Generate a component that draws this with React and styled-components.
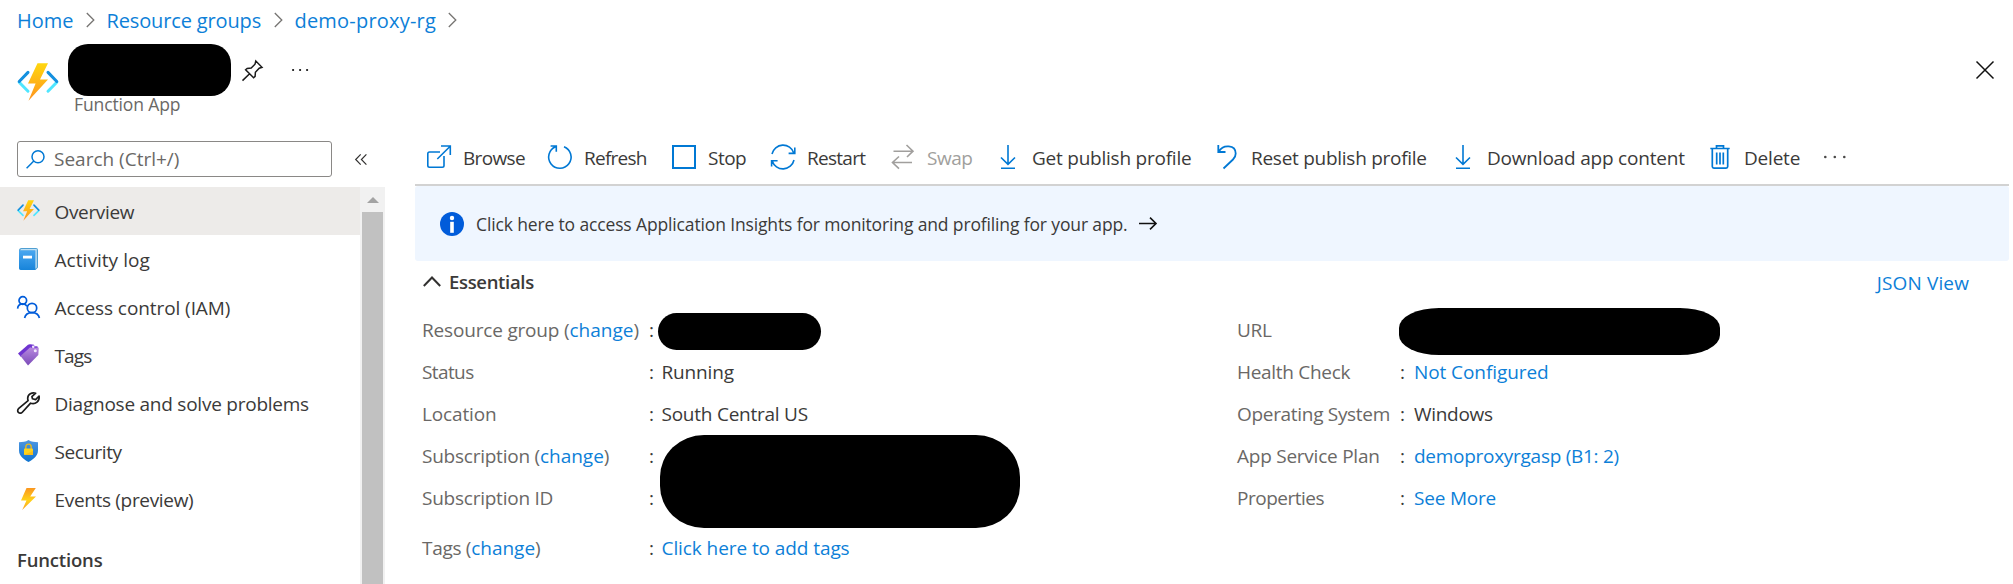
import React from "react";
import styled, { createGlobalStyle } from "styled-components";

const GlobalStyle = createGlobalStyle`
  * { box-sizing: border-box; }
  body {
    margin: 0;
    background: #fff;
    color: #3b3a39;
    font-family: "Open Sans", "Noto Sans", sans-serif;
    font-size: 19px;
    overflow: hidden;
  }
  svg { display: block; flex: none; overflow: visible; }
`;

const BLUE = "#0078d4";
const LINK = "#0d7fd8";

const Page = styled.div`
  display: flex;
  flex-direction: column;
  width: 2013px;
  height: 584px;
  overflow: hidden;
  white-space: nowrap;
`;

const Text = styled.span`
  padding-top: 2px;
  letter-spacing: ${(p) => p.$ls || 0}px;
`;

/* ---------- header ---------- */

const Breadcrumbs = styled.nav`
  display: flex;
  align-items: center;
  height: 40px;
  padding-left: 17px;
  font-size: 20px;
`;

const Crumb = styled.a`
  width: ${(p) => p.$w}px;
  padding-top: 1px;
  letter-spacing: ${(p) => p.$ls}px;
  line-height: 40px;
  color: ${LINK};
`;

const CrumbArrow = styled.svg`
  margin-right: ${(p) => p.$gap}px;
`;

const Header = styled.header`
  display: flex;
  align-items: flex-start;
  height: 85px;
  padding: 4px 19px 0 17px;
`;

const AppIconBox = styled.div`
  padding-top: 19px;
  width: 51px;
`;

const TitleBlock = styled.div`
  display: flex;
  flex-direction: column;
  width: 163px;
`;

const HiddenTitle = styled.div`
  height: 52px;
  border-radius: 20px;
  background: #000;
`;

const Subtitle = styled.div`
  padding-left: 6px;
  font-size: 17.5px;
  line-height: 17px;
  letter-spacing: -0.12px;
  color: #6a6866;
`;

const HeaderAction = styled.div`
  padding: ${(p) => p.$pad};
`;

const CloseBox = styled.div`
  margin-left: auto;
  padding-top: 17px;
`;

/* ---------- body ---------- */

const Body = styled.div`
  display: flex;
  flex: 1;
  min-height: 0;
`;

const Sidebar = styled.aside`
  display: flex;
  flex-direction: column;
  width: 385px;
`;

const SearchRow = styled.div`
  display: flex;
  align-items: center;
  height: 62px;
  padding: 6px 0 0 17px;
`;

const SearchBox = styled.div`
  display: flex;
  align-items: center;
  gap: 9px;
  width: 315px;
  height: 36px;
  margin-right: 23px;
  padding-left: 8px;
  border: 1px solid #8a8886;
  border-radius: 3px;
  color: #6a6866;
`;

const SearchText = styled.span`
  padding-bottom: 1px;
`;

const MenuArea = styled.div`
  display: flex;
  flex: 1;
  min-height: 0;
`;

const Menu = styled.ul`
  flex: 1;
  margin: 0;
  padding: 0;
  list-style: none;
`;

const MenuItem = styled.li`
  display: flex;
  align-items: center;
  gap: 13.5px;
  height: 48px;
  padding-left: 16px;
  background: ${(p) => (p.$active ? "#edebe9" : "transparent")};
`;

const MenuIcon = styled.span`
  display: flex;
  align-items: center;
  justify-content: center;
  width: 25px;
  height: 24px;
  margin-top: -1px;
`;

const MenuHeading = styled.li`
  height: 61px;
  padding: 24px 0 0 17px;
  font-size: 18.5px;
  font-weight: 600;
  line-height: 25px;
  letter-spacing: -0.17px;
`;

const Scrollbar = styled.div`
  display: flex;
  flex-direction: column;
  align-items: center;
  width: 25px;
  background: #f1f1f1;
`;

const ScrollArrow = styled.div`
  width: 0;
  height: 0;
  margin: 10px 0 9px;
  border: 6px solid transparent;
  border-top: 0;
  border-bottom: 6px solid #a3a3a3;
`;

const Thumb = styled.div`
  flex: 1;
  width: 21px;
  background: #c1c1c1;
`;

const Main = styled.main`
  flex: 1;
  margin-left: 30px;
  margin-right: 4px;
`;

const Toolbar = styled.div`
  display: flex;
  align-items: center;
  height: 61px;
  padding: 4px 0 0 12px;
  border-bottom: 2px solid #d2d2d2;
`;

const ToolButton = styled.div`
  display: flex;
  align-items: center;
  gap: 12px;
  width: ${(p) => p.$w}px;
  height: 36px;
  color: ${(p) => (p.$disabled ? "#a19f9d" : "#3b3a39")};
`;

const Banner = styled.div`
  display: flex;
  align-items: center;
  height: 75px;
  padding-left: 25px;
  border-radius: 3px;
  background: #eff6ff;
  font-size: 17.5px;
`;

const BannerText = styled.span`
  width: 662px;
  margin: 0 0 0 12px;
  letter-spacing: -0.14px;
`;

const EssentialsBar = styled.div`
  display: flex;
  align-items: center;
  justify-content: space-between;
  height: 42px;
  padding: 0 40px 0 8px;
`;

const EssentialsTitle = styled.div`
  display: flex;
  align-items: center;
  gap: 8px;
  margin-bottom: 1px;
  font-size: 18.5px;
  font-weight: 600;
  letter-spacing: -0.33px;
`;

const Link = styled.a`
  color: ${LINK};
  letter-spacing: ${(p) => p.$ls || 0}px;
`;

const JsonLink = styled(Link)`
  padding-top: 2px;
`;

const Details = styled.div`
  position: relative;
  display: flex;
  padding: 6px 0 0 7px;
`;

const DetailColumn = styled.dl`
  width: ${(p) => p.$w}px;
  margin: 0;
`;

const DetailRow = styled.div`
  display: flex;
  align-items: center;
  height: 42px;
  margin-top: ${(p) => (p.$spaced ? 8 : 0)}px;
`;

const Term = styled.dt`
  width: ${(p) => p.$w}px;
  color: #6a6866;
  letter-spacing: ${(p) => p.$ls || 0}px;
`;

const Colon = styled.span`
  width: ${(p) => p.$w}px;
`;

const Value = styled.dd`
  margin: 0;
  letter-spacing: ${(p) => p.$ls || 0}px;
`;

const Redaction = styled.div`
  position: absolute;
  left: ${(p) => p.$x}px;
  top: ${(p) => p.$y}px;
  width: ${(p) => p.$w}px;
  height: ${(p) => p.$h}px;
  border-radius: ${(p) => p.$r};
  background: #000;
`;

/* ---------- icons ---------- */

const Line = styled.svg.attrs((p) => ({ fill: "none", strokeWidth: p.strokeWidth || 1.6 }))`
  stroke: ${(p) => p.$c || BLUE};
`;

function FunctionIcon({ width, id }) {
  return (
    <svg width={width} height={(width * 38) / 42} viewBox="0 0 42 38">
      <defs>
        <linearGradient id={id} x1="0" y1="0" x2="0" y2="1">
          <stop offset="0" stopColor="#ffd70f" />
          <stop offset="1" stopColor="#fe921f" />
        </linearGradient>
      </defs>
      <g fill="none" strokeWidth="3" strokeLinecap="round">
        <path d="M11 28.2 2.2 19.3M31 28.2 39.8 19.3" stroke="#50e6ff" />
        <path d="M11 9.4 2.2 18.5M31 9.4 39.8 18.5" stroke="#1490df" />
      </g>
      <path d="M20.5.3H31L23 16.6H31L11.5 37.8 18.6 20.6H11Z" fill={`url(#${id})`} />
    </svg>
  );
}

const LogIcon = () => (
  <svg width="19" height="22" viewBox="0 0 19 22">
    <defs>
      <linearGradient id="log" x1="0" y1="0" x2="0" y2="1">
        <stop offset="0" stopColor="#4aa7f0" />
        <stop offset="1" stopColor="#1784da" />
      </linearGradient>
    </defs>
    <path d="M2.5 0H17Q19 0 19 2V19.5L16.5 22H2.5Q0 22 0 19V2.5Q0 0 2.5 0Z" fill="#4f9fd2" />
    <path d="M2 1H17.8V19.5L16.3 20.7V2.4H1Z" fill="#bfe0f5" />
    <path d="M0 2.4H16.2V22H2Q0 22 0 20Z" fill="url(#log)" />
    <rect x="4" y="7.7" width="9" height="2.8" fill="#fff" />
  </svg>
);

const PeopleIcon = () => (
  <Line width="23" height="22" viewBox="0 0 23 22" $c="#015cda" strokeWidth="1.7">
    <circle cx="5.8" cy="4.5" r="3.8" />
    <circle cx="15" cy="12" r="4.7" />
    <path d="M.6 12.6C1.2 6.8 8 6.8 10 10.2M7.6 22C9 14.7 21 14.7 22.4 22" />
  </Line>
);

const TagIcon = () => (
  <svg width="21" height="22" viewBox="0 0 21 22">
    <defs>
      <linearGradient id="tag" x1="0" y1="0" x2="0" y2="1">
        <stop offset="0" stopColor="#b98be0" />
        <stop offset="1" stopColor="#7a4ab8" />
      </linearGradient>
    </defs>
    <path d="M0 9.5 10 .8Q11 0 12.3.2L16 .8 17 4 3 13Z" fill="#6f34d0" />
    <path d="M2.5 12 12.5 3H19.5Q20.7 3.2 20.7 4.5L20.3 11 10 21.6Z" fill="url(#tag)" />
    <path d="M12.5 3H19.5" stroke="#6f34d0" strokeWidth="1.4" />
    <circle cx="15.2" cy="2.8" r="1.3" fill="#f1e6fb" />
    <circle cx="17.3" cy="6.8" r="1.5" fill="#f1e6fb" />
  </svg>
);

const WrenchIcon = () => (
  <Line width="23" height="22" viewBox="0 0 23 22" $c="#1b1b1b" strokeWidth="1.7" strokeLinejoin="round">
    <path d="M18.7 1.2C15-.1 10.7 2.2 10.7 6.3Q10.7 7.6 11.1 8.6L1.8 16.4C.4 17.7.4 19.4 1.4 20.4 2.6 21.6 4.2 21.4 5.3 20.2L13.6 11.2C18.7 12.8 22.8 9 22.1 4L18.6 7.6 15.5 6.8 14.9 4.6Z" />
  </Line>
);

const ShieldIcon = () => (
  <svg width="19" height="22" viewBox="0 0 19 22">
    <defs>
      <linearGradient id="shield" x1="0" y1="0" x2="0" y2="1">
        <stop offset="0" stopColor="#4f97e2" />
        <stop offset="1" stopColor="#0f74d0" />
      </linearGradient>
    </defs>
    <path d="M9.5 0C12.5 2 15.5 2 19 2.3V10.5C19 16.5 13 20 9.5 22 6 20 0 16.5 0 10.5V2.3C3.5 2 6.5 2 9.5 0Z" fill="url(#shield)" />
    <path d="M6.8 9V7C6.8 3.2 12.2 3.2 12.2 7V9" fill="none" stroke="#e8b820" strokeWidth="1.4" />
    <rect x="5" y="8.6" width="9" height="6.4" rx=".8" fill="#ffd319" />
    <path d="M5 15 14 11V15Z" fill="#f6bd1c" />
  </svg>
);

const BoltIcon = () => (
  <svg width="15" height="22" viewBox="0 0 15 22">
    <defs>
      <linearGradient id="bolt" x1="0" y1="0" x2="0" y2="1">
        <stop offset="0" stopColor="#fa961f" />
        <stop offset=".55" stopColor="#ffd21a" />
        <stop offset="1" stopColor="#fb9f24" />
      </linearGradient>
    </defs>
    <path d="M5.5 0H14.8L9.2 8.4H15L1.2 22 5.5 12.4H0Z" fill="url(#bolt)" />
  </svg>
);

const Ellipsis = ({ color, size, step }) => (
  <svg width={step * 2 + size} height="4" viewBox={`0 0 ${step * 2 + size} 4`} fill={color}>
    {[0, 1, 2].map((i) => (
      <circle key={i} cx={size / 2 + i * step} cy="2" r={size / 2} />
    ))}
  </svg>
);

const Tool = ({ children, ...p }) => (
  <Line width="24" height="24" viewBox="0 0 24 24" {...p}>
    {children}
  </Line>
);

const DownloadArrow = () => (
  <Tool>
    <path d="M12 0V19M5 12.5 12 19.3 19 12.5M5 23.2H19" />
  </Tool>
);

const TOOLS = [
  { text: "Browse", ls: -0.65, w: 121, icon: <Tool><path d="M13 7H2.5Q.8 7 .8 8.7V20.5Q.8 22.2 2.5 22.2H15.3Q17 22.2 17 20.5V11M10.3 14 23.2 1.2M14 1H23.3V10" /></Tool> },
  { text: "Refresh", ls: -0.75, w: 124, icon: <Tool><path d="M16 1.7A11.2 11.2 0 1 1 7.5 1.8M2.6 1H8.3V6.7" /></Tool> },
  { text: "Stop", ls: -0.5, w: 99, icon: <Tool strokeWidth="2"><rect x="1" y="1" width="22" height="22" /></Tool> },
  { text: "Restart", ls: -0.72, w: 120, icon: <Tool><path d="M1 9A11.3 11.3 0 0 1 22.8 8M23.8 2.6V8.4H17.6M23 15A11.3 11.3 0 0 1 1.2 16M.6 21.5V15.7H6.6" /></Tool> },
  { text: "Swap", ls: -0.5, w: 105, disabled: true, icon: <Tool $c="#a19f9d"><path d="M2.5 6.2H22M15.5 0 22 6.2 16 12M21 17.5H1.5M8 11.5 1.5 17.5 8 23.7" /></Tool> },
  { text: "Get publish profile", ls: -0.23, w: 219, icon: <DownloadArrow /> },
  { text: "Reset publish profile", ls: -0.27, w: 236, icon: <Tool strokeWidth="1.8"><path d="M3.3 0V7H10.5M3.8 6.5C8-1 20.7-.3 20.7 8.5 20.7 11 19.8 12.8 18 14.5L8.5 23.5" /></Tool> },
  { text: "Download app content", ls: -0.2, w: 257, icon: <DownloadArrow /> },
  { text: "Delete", ls: -0.2, w: 116, icon: <Tool strokeWidth="1.7"><path d="M2.3 3.5H21.7M8.5 3.5V.9H15.5V3.5M4.3 3.5V21.5Q4.3 23.1 5.9 23.1H18.1Q19.7 23.1 19.7 21.5V3.5M8.7 7.5V19.5M12 7.5V19.5M15.3 7.5V19.5" /></Tool> },
];

const MENU = [
  { text: "Overview", ls: -0.35, active: true, icon: <FunctionIcon width={23} id="fn-small" /> },
  { text: "Activity log", ls: 0.05, icon: <LogIcon /> },
  { text: "Access control (IAM)", ls: -0.08, icon: <PeopleIcon /> },
  { text: "Tags", ls: -0.9, icon: <TagIcon /> },
  { text: "Diagnose and solve problems", ls: -0.24, icon: <WrenchIcon /> },
  { text: "Security", ls: -0.45, icon: <ShieldIcon /> },
  { text: "Events (preview)", ls: -0.33, icon: <BoltIcon /> },
];

const LEFT = [
  { term: "Resource group", change: true, ls: -0.18 },
  { term: "Status", ls: -0.6, value: "Running", vls: -0.15 },
  { term: "Location", ls: -0.14, value: "South Central US", vls: -0.24 },
  { term: "Subscription", change: true, ls: -0.24 },
  { term: "Subscription ID", ls: -0.24 },
  { term: "Tags", change: true, ls: -0.3, value: "Click here to add tags", vls: -0.08, link: true, spaced: true },
];

const RIGHT = [
  { term: "URL", ls: -0.29 },
  { term: "Health Check", ls: -0.3, value: "Not Configured", vls: -0.08, link: true },
  { term: "Operating System", ls: -0.31, value: "Windows", vls: -0.3 },
  { term: "App Service Plan", ls: -0.24, value: "demoproxyrgasp (B1: 2)", vls: -0.28, link: true },
  { term: "Properties", ls: -0.49, value: "See More", vls: -0.2, link: true },
];

function DetailList({ rows, width, termWidth, colonWidth }) {
  return (
    <DetailColumn $w={width}>
      {rows.map((r) => (
        <DetailRow key={r.term} $spaced={r.spaced}>
          <Term $w={termWidth} $ls={r.ls}>
            {r.term}
            {r.change && <> (<Link>change</Link>)</>}
          </Term>
          <Colon $w={colonWidth}>:</Colon>
          <Value $ls={r.vls}>{r.link ? <Link $ls={r.vls}>{r.value}</Link> : r.value}</Value>
        </DetailRow>
      ))}
    </DetailColumn>
  );
}

const Chevron = ({ gap }) => (
  <CrumbArrow $gap={gap} width="9" height="16" viewBox="0 0 9 16" fill="none" stroke="#767472" strokeWidth="1.3">
    <path d="M.8 1 7.8 8 .8 15" />
  </CrumbArrow>
);

export default function App() {
  return (
    <Page>
      <GlobalStyle />
      <Breadcrumbs>
        <Crumb $w={68.5} $ls={0}>Home</Crumb>
        <Chevron gap={12} />
        <Crumb $w={167} $ls={-0.14}>Resource groups</Crumb>
        <Chevron gap={12} />
        <Crumb $w={153.5} $ls={0.2}>demo-proxy-rg</Crumb>
        <Chevron gap={0} />
      </Breadcrumbs>
      <Header>
        <AppIconBox><FunctionIcon width={42} id="fn-large" /></AppIconBox>
        <TitleBlock>
          <HiddenTitle />
          <Subtitle>Function App</Subtitle>
        </TitleBlock>
        <HeaderAction $pad="16px 0 0 11px">
          <Line width="21" height="21" viewBox="0 0 21 21" $c="#1b1b1b" strokeWidth="1.5">
            <path d="M13.8 1 20 7.3 17.2 8.2 13.4 12.2 13.1 16.3 11.6 17.8 3.6 9.8 5.2 8.4 9.2 8 13 4.2ZM7.6 13.8.5 20.6" />
          </Line>
        </HeaderAction>
        <HeaderAction $pad="24px 0 0 29px"><Ellipsis color="#111" size={2.2} step={7} /></HeaderAction>
        <CloseBox>
          <Line width="18" height="18" viewBox="0 0 18 18" $c="#111" strokeWidth="1.5">
            <path d="M.5.5 17.5 17.5M17.5.5.5 17.5" />
          </Line>
        </CloseBox>
      </Header>
      <Body>
        <Sidebar>
          <SearchRow>
            <SearchBox>
              <Line width="19" height="19" viewBox="0 0 19 19" strokeWidth="1.5">
                <circle cx="12" cy="6.8" r="6" />
                <path d="M7.8 11 .6 18.3" />
              </Line>
              <SearchText>Search (Ctrl+/)</SearchText>
            </SearchBox>
            <Line width="12" height="11" viewBox="0 0 12 11" $c="#323130" strokeWidth="1.2">
              <path d="M5.7.4.7 5.5 5.7 10.6M11.4.4 6.4 5.5 11.4 10.6" />
            </Line>
          </SearchRow>
          <MenuArea>
            <Menu>
              {MENU.map((m) => (
                <MenuItem key={m.text} $active={m.active}>
                  <MenuIcon>{m.icon}</MenuIcon>
                  <Text $ls={m.ls}>{m.text}</Text>
                </MenuItem>
              ))}
              <MenuHeading>Functions</MenuHeading>
            </Menu>
            <Scrollbar>
              <ScrollArrow />
              <Thumb />
            </Scrollbar>
          </MenuArea>
        </Sidebar>
        <Main>
          <Toolbar>
            {TOOLS.map((t) => (
              <ToolButton key={t.text} $w={t.w} $disabled={t.disabled}>
                {t.icon}
                <Text $ls={t.ls}>{t.text}</Text>
              </ToolButton>
            ))}
            <Ellipsis color="#4a4948" size={2.6} step={9.5} />
          </Toolbar>
          <Banner>
            <svg width="24" height="24" viewBox="0 0 24 24">
              <circle cx="12" cy="12" r="12" fill="#015cda" />
              <circle cx="12" cy="6" r="2.2" fill="#fff" />
              <rect x="10.2" y="9.8" width="3.6" height="11" fill="#fff" />
            </svg>
            <BannerText>
              Click here to access Application Insights for monitoring and profiling for your app.
            </BannerText>
            <Line width="19" height="13" viewBox="0 0 19 13" $c="#111" strokeWidth="1.6">
              <path d="M1 6.5H18M12 .6 18 6.5 12 12.4" />
            </Line>
          </Banner>
          <EssentialsBar>
            <EssentialsTitle>
              <Line width="18" height="11" viewBox="0 0 18 11" $c="#323130" strokeWidth="2">
                <path d="M.8 10 9 1.5 17.2 10" />
              </Line>
              Essentials
            </EssentialsTitle>
            <JsonLink $ls={0.12}>JSON View</JsonLink>
          </EssentialsBar>
          <Details>
            <DetailList rows={LEFT} width={815} termWidth={227} colonWidth={12.5} />
            <DetailList rows={RIGHT} width={700} termWidth={163} colonWidth={14} />
            <Redaction $x={243} $y={10} $w={163} $h={37} $r="19px" />
            <Redaction $x={245} $y={132} $w={360} $h={93} $r="44px / 42px" />
            <Redaction $x={984} $y={5} $w={321} $h={47} $r="40px / 20px" />
          </Details>
        </Main>
      </Body>
    </Page>
  );
}
